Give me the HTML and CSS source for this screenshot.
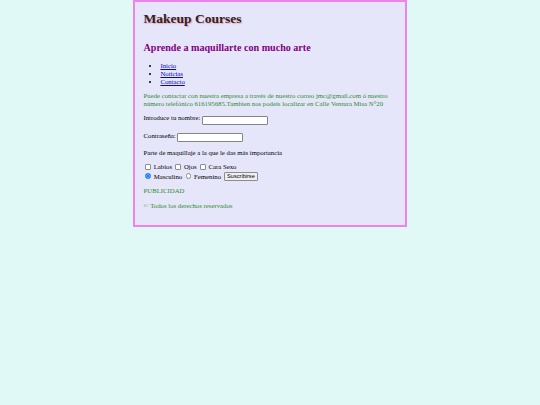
FILE: index.html
```html
<!DOCTYPE html>
<html lang="es">
<head>
<meta charset="utf-8">
<title>Makeup Courses</title>
<link rel="stylesheet" href="styles.css">
</head>
<body>
<div class="page">
  <header class="header">
    <h1 class="title">Makeup Courses</h1>
  </header>
  <h2 class="subtitle">Aprende a maquillarte con mucho arte</h2>
  <nav class="menu">
    <ul class="menu-list">
      <li><a href="#">Inicio</a></li>
      <li><a href="#">Noticias</a></li>
      <li><a href="#">Contacto</a></li>
    </ul>
  </nav>
  <p class="info">Puede contactar con nuestra empresa a través de nuestro correo jmc@gmail.com ó nuestro número telefónico 616195685.Tambien nos podeis localizar en Calle Ventura Misa N°20</p>
  <form class="form">
    <p class="row">Introduce tu nombre: <input type="text" class="field"></p>
    <p class="row">Contraseña: <input type="password" class="field"></p>
    <p class="row">Parte de maquillaje a la que le das más importancia</p>
    <p class="row opts"><input type="checkbox" class="tick box"> Labios <input type="checkbox" class="tick box"> Ojos <input type="checkbox" class="tick box"> Cara Sexo<br><input type="radio" name="sexo" class="tick dot" checked> Masculino <input type="radio" name="sexo" class="tick dot"> Femenino <input type="submit" class="btn" value="Suscribirse"></p>
  </form>
  <p class="green">PUBLICIDAD</p>
  <footer class="footer">
    <p class="green">© Todos los derechos reservados</p>
  </footer>
</div>
</body>
</html>
```

FILE: styles.css
```css
html {
  background: #e0f8f6;
}

body {
  margin: 0;
  font-family: "Liberation Serif", "Times New Roman", serif;
  font-size: 6.75px;
  line-height: 7.76px;
  color: #000;
}

.page {
  width: 253px;
  margin: 0 auto;
  padding: 0 8.4px 8.4px;
  background: #e6e6fa;
  border: 2.2px solid #ee82ee;
}

.title {
  margin: 8.9px 0 0;
  font-size: 13.5px;
  line-height: 15.5px;
  font-weight: bold;
  color: #2a2426;
  text-shadow: 1.2px 1.2px 1px #f0a2b8;
}

.subtitle {
  margin: 16px 0 8px;
  font-size: 10.1px;
  line-height: 11.6px;
  color: #800080;
}

.menu-list {
  margin: 6.75px 0;
  padding-left: 16.9px;
}

.menu-list a {
  color: #0000ee;
}

.info,
.green {
  color: #2e8b2e;
}

p {
  margin: 6.75px 0;
}

.field {
  box-sizing: border-box;
  width: 66px;
  height: 9px;
  margin: 0;
  padding: 0 1px;
  border: 0.8px solid #858585;
  border-radius: 1px;
  background: #fff;
  font-size: 5.6px;
  vertical-align: -2px;
}

.opts {
  line-height: 8.2px;
}

.tick {
  appearance: none;
  box-sizing: border-box;
  width: 5.5px;
  height: 5.5px;
  margin: 0 1.3px 0 1.7px;
  border: 0.6px solid #8c8c8c;
  background: #fff;
  vertical-align: -0.5px;
}

.box {
  border-radius: 1px;
}

.dot {
  border-radius: 50%;
}

.dot:checked {
  border: 0.6px solid #1a7cf5;
  background: radial-gradient(circle, #1a7cf5 0 1.5px, #cfe2fb 1.7px 1.9px, #1a7cf5 2.1px);
}

.btn {
  margin: 0 0 0 1px;
  padding: 0.5px 2.4px;
  font-size: 5.6px;
  line-height: 6px;
  border: 0.6px solid #8c8c8c;
  border-radius: 1px;
  background: #efefef;
  color: #000;
  vertical-align: 0;
}
```
